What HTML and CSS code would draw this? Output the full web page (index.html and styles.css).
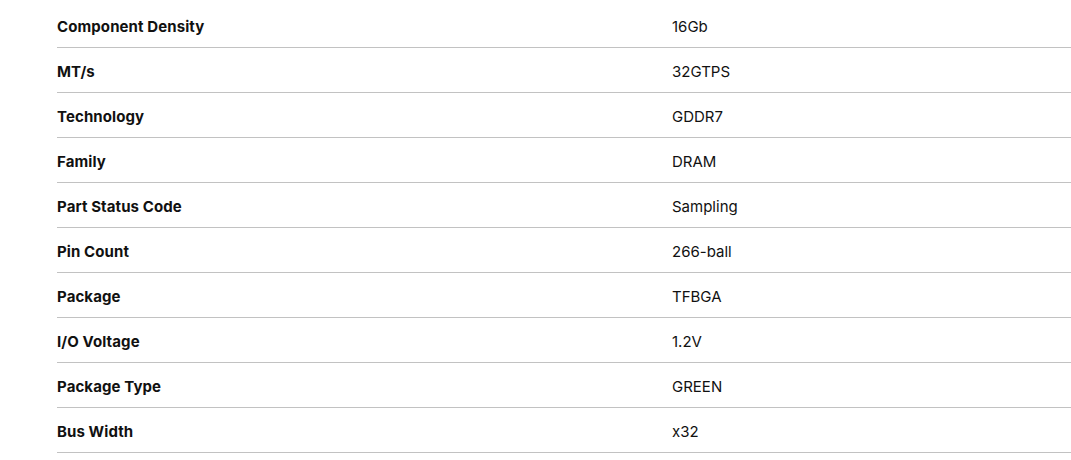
FILE: index.html
```html
<!DOCTYPE html>
<html lang="en">
<head>
<meta charset="utf-8">
<link rel="stylesheet" href="styles.css">
</head>
<body>
<div class="specs">
  <div class="row"><div class="label">Component Density</div><div class="value">16Gb</div></div>
  <div class="row"><div class="label">MT/s</div><div class="value">32GTPS</div></div>
  <div class="row"><div class="label">Technology</div><div class="value">GDDR7</div></div>
  <div class="row"><div class="label">Family</div><div class="value">DRAM</div></div>
  <div class="row"><div class="label">Part Status Code</div><div class="value">Sampling</div></div>
  <div class="row"><div class="label">Pin Count</div><div class="value">266-ball</div></div>
  <div class="row"><div class="label">Package</div><div class="value">TFBGA</div></div>
  <div class="row"><div class="label">I/O Voltage</div><div class="value">1.2V</div></div>
  <div class="row"><div class="label">Package Type</div><div class="value">GREEN</div></div>
  <div class="row"><div class="label">Bus Width</div><div class="value">x32</div></div>
</div>
</body>
</html>
```
FILE: styles.css
```css
html, body {
  margin: 0;
  padding: 0;
  background: #fff;
}
body {
  font-family: Inter, "Liberation Sans", sans-serif;
  color: #111;
  overflow: hidden;
}
.specs {
  padding-left: 57px;
  padding-top: 3px;
}
.row {
  display: grid;
  grid-template-columns: 615px 1fr;
  height: 45px;
  box-sizing: border-box;
  border-bottom: 1px solid #c2c2c2;
  align-items: center;
  font-size: 15px;
  line-height: 20px;
}
.label {
  font-weight: 700;
  letter-spacing: 0.1px;
  padding-top: 4px;
}
.value {
  font-weight: 400;
  padding-top: 4px;
}
```
